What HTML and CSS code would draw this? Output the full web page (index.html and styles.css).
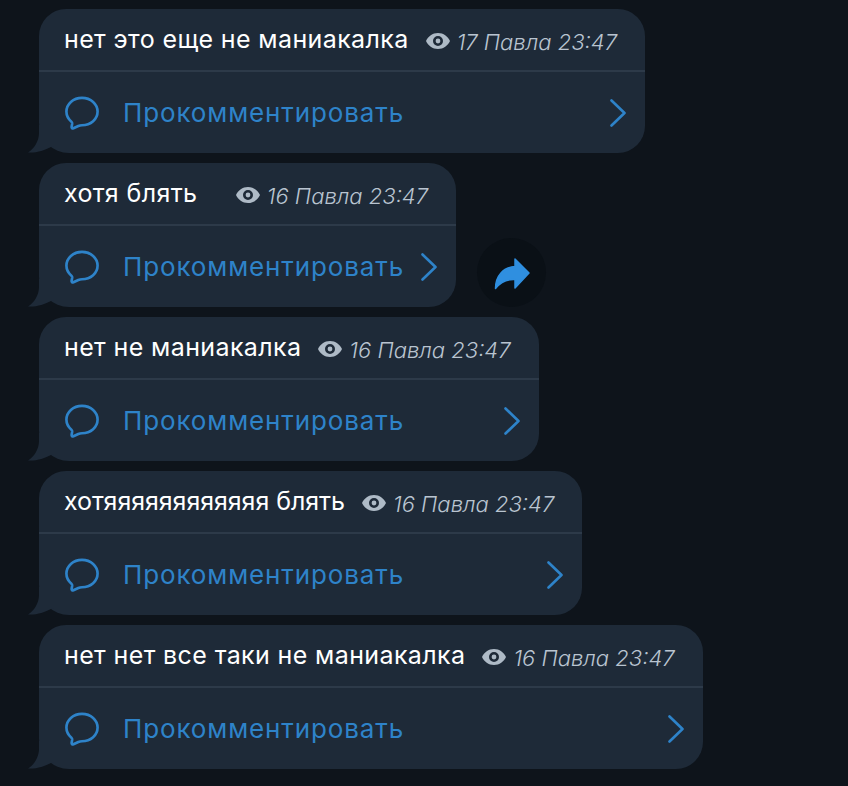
FILE: index.html
```html
<!DOCTYPE html>
<html lang="ru">
<head>
<meta charset="utf-8">
<title>Чат</title>
<link rel="stylesheet" href="styles.css">
</head>
<body>
<svg class="defs" width="0" height="0" aria-hidden="true">
  <symbol id="i-comment" viewBox="0 0 36 36">
    <path d="M18 2C8.600 2 1.500 8.500 1.500 16.500c0 4.300 2 8 5.300 10.700.6.500.9 1.300.8 2.100l-.6 3.300c-.2 1.200.8 2 1.900 1.600l5.200-2.500c1.200-.5 2.600-.7 3.900-.7C27.400 31 34.500 24.500 34.500 16.500S27.400 2 18 2z" fill="none" stroke="currentColor" stroke-width="2.800" stroke-linejoin="round"/>
  </symbol>
  <symbol id="i-eye" viewBox="0 0 24 16">
    <path fill-rule="evenodd" d="M12 0C6.500 0 2.200 3.400 0 8c2.200 4.600 6.500 8 12 8s9.800-3.400 12-8c-2.200-4.600-6.500-8-12-8zm0 13a5 5 0 1 1 0-10 5 5 0 0 1 0 10zm0-2.600a2.400 2.400 0 1 0 0-4.800 2.400 2.400 0 0 0 0 4.800z" fill="currentColor"/>
  </symbol>
  <symbol id="i-chev" viewBox="0 0 16 28">
    <path d="M1.500 1.500L14.500 14 1.500 26.500" fill="none" stroke="currentColor" stroke-width="2.600" stroke-linecap="round" stroke-linejoin="round"/>
  </symbol>
  <symbol id="i-tail" viewBox="0 0 26 28">
    <path d="M11 0v8C11 16 6 24 0 27.500 9 28 16 25.500 24 21.500L26 22V0z" fill="currentColor"/>
  </symbol>
</svg>
<main class="chat">
  <div class="row">
    <article class="bubble">
      <svg class="tail"><use href="#i-tail"/></svg>
      <div class="head"><span class="msg">нет это еще не маниакалка</span><span class="meta"><svg class="eye"><use href="#i-eye"/></svg><time class="time">17 Павла 23:47</time></span></div>
      <div class="foot"><svg class="cmt"><use href="#i-comment"/></svg><span class="label">Прокомментировать</span><svg class="chev"><use href="#i-chev"/></svg></div>
    </article>
  </div>
  <div class="row">
    <article class="bubble">
      <svg class="tail"><use href="#i-tail"/></svg>
      <div class="head"><span class="msg">хотя блять</span><span class="meta"><svg class="eye"><use href="#i-eye"/></svg><time class="time">16 Павла 23:47</time></span></div>
      <div class="foot"><svg class="cmt"><use href="#i-comment"/></svg><span class="label">Прокомментировать</span><svg class="chev"><use href="#i-chev"/></svg></div>
    </article>
    <button class="share" type="button" aria-label="Переслать">
      <svg class="share-icon" viewBox="0 0 36 32"><path d="M21 1l14 14-14 15v-8.500C13 21 6.500 24 1.500 30.500 1.500 18 9 9.500 21 8.500z" fill="currentColor" stroke="currentColor" stroke-width="1.500" stroke-linejoin="round"/></svg>
    </button>
  </div>
  <div class="row">
    <article class="bubble">
      <svg class="tail"><use href="#i-tail"/></svg>
      <div class="head"><span class="msg">нет не маниакалка</span><span class="meta"><svg class="eye"><use href="#i-eye"/></svg><time class="time">16 Павла 23:47</time></span></div>
      <div class="foot"><svg class="cmt"><use href="#i-comment"/></svg><span class="label">Прокомментировать</span><svg class="chev"><use href="#i-chev"/></svg></div>
    </article>
  </div>
  <div class="row">
    <article class="bubble">
      <svg class="tail"><use href="#i-tail"/></svg>
      <div class="head"><span class="msg msg-tight">хотяяяяяяяяяяяя блять</span><span class="meta"><svg class="eye"><use href="#i-eye"/></svg><time class="time">16 Павла 23:47</time></span></div>
      <div class="foot"><svg class="cmt"><use href="#i-comment"/></svg><span class="label">Прокомментировать</span><svg class="chev"><use href="#i-chev"/></svg></div>
    </article>
  </div>
  <div class="row">
    <article class="bubble">
      <svg class="tail"><use href="#i-tail"/></svg>
      <div class="head"><span class="msg">нет нет все таки не маниакалка</span><span class="meta"><svg class="eye"><use href="#i-eye"/></svg><time class="time">16 Павла 23:47</time></span></div>
      <div class="foot"><svg class="cmt"><use href="#i-comment"/></svg><span class="label">Прокомментировать</span><svg class="chev"><use href="#i-chev"/></svg></div>
    </article>
  </div>
</main>
</body>
</html>
```
FILE: styles.css
```css
* { box-sizing: border-box; }
html, body { margin: 0; height: 100%; }
body {
  background: #0e141b;
  font-family: Inter, "Noto Sans", sans-serif;
  overflow: hidden;
}
.defs { position: absolute; }
.chat {
  display: flex;
  flex-direction: column;
  gap: 10px;
  padding: 9px 0 0 39px;
}
.row {
  display: flex;
  align-items: flex-end;
  gap: 21px;
}
.bubble {
  position: relative;
  width: fit-content;
  height: 144px;
  background: #1e2a38;
  border-radius: 27px 27px 27px 30px;
}
.tail {
  position: absolute;
  left: -11px;
  bottom: 0;
  width: 26px;
  height: 28px;
  color: #1e2a38;
}
.head {
  display: flex;
  justify-content: space-between;
  align-items: center;
  gap: 17px;
  height: 63px;
  padding: 0 28px 0 25px;
  border-bottom: 2px solid #2d3a49;
}
.msg {
  color: #fff;
  font-size: 25px;
  letter-spacing: 0.38px;
  white-space: nowrap;
  margin-top: -1px;
}
.msg-tight { letter-spacing: -0.05px; }
.meta {
  display: flex;
  align-items: center;
  gap: 7px;
  color: #b9c4d0;
  white-space: nowrap;
  margin-top: 3px;
}
.eye { width: 24px; height: 16px; color: #aebac6; }
.time { font-size: 22px; font-style: italic; font-weight: 300; padding-top: 1px; }
.foot {
  display: flex;
  align-items: center;
  height: 81px;
  padding: 0 19px 0 26px;
  color: #2e83c9;
}
.cmt { width: 34px; height: 36px; flex: none; }
.label {
  margin-left: 24px;
  margin-right: 17px;
  font-size: 26px;
  letter-spacing: 0.87px;
  white-space: nowrap;
}
.chev { width: 16px; height: 28px; margin-left: auto; flex: none; }
.share {
  width: 69px;
  height: 69px;
  padding: 2px 0 0 1px;
  border: 0;
  border-radius: 50%;
  background: #0a1016;
  color: #2f8fe0;
  display: flex;
  align-items: center;
  justify-content: center;
}
.share-icon { width: 36px; height: 32px; }
```
